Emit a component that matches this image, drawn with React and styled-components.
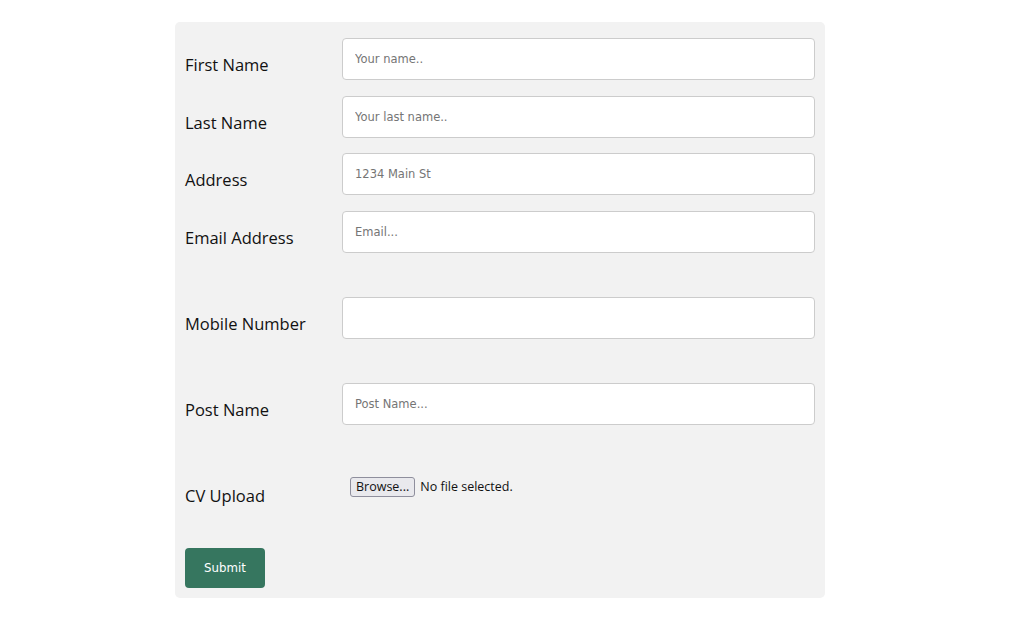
import React from "react";
import styled, { createGlobalStyle } from "styled-components";

const GlobalStyle = createGlobalStyle`
  body {
    margin: 0;
    background: #ffffff;
    font-family: "Open Sans", "Noto Sans", sans-serif;
  }
  * { box-sizing: border-box; }
`;

const Page = styled.div`
  width: 1000px;
  padding-top: 22px;
`;

const Container = styled.div`
  width: 650px;
  margin: 0 auto;
  padding: 10px;
  background: #f2f2f2;
  border-radius: 5px;
`;

const Row = styled.div`
  display: grid;
  grid-template-columns: 157px 1fr;
  align-items: start;
  height: ${(p) => p.$h}px;
`;

const Label = styled.label`
  display: block;
  padding-top: 22px;
  font-size: 16.5px;
  line-height: 22px;
  color: #111;
`;

const Field = styled.div`
  padding-top: 6px;
`;

const TextInput = styled.input`
  width: 100%;
  height: 42px;
  padding: 12px;
  border: 1px solid #ccc;
  border-radius: 4px;
  background: #fff;
  font-family: "DejaVu Sans", Verdana, sans-serif;
  font-size: 11.5px;
  color: #333;
  outline: none;

  &::placeholder {
    color: #757575;
  }
`;

const FileBox = styled.label`
  display: flex;
  align-items: center;
  gap: 5px;
  padding: 8px;
  font-family: "Open Sans", "Noto Sans", sans-serif;
  font-size: 12.5px;
  color: #111;

  input {
    display: none;
  }
`;

const BrowseButton = styled.span`
  display: inline-flex;
  align-items: center;
  height: 20px;
  padding: 0 5px;
  border: 1px solid #8f8f9d;
  border-radius: 3px;
  background: #e9e9ed;
  font-size: 12.5px;
  color: #111;
`;

const Submit = styled.button`
  margin-top: 6px;
  width: 80px;
  height: 40px;
  border: none;
  border-radius: 4px;
  background: #36765f;
  color: #fff;
  font-family: "DejaVu Sans", Verdana, sans-serif;
  font-size: 11.8px;
  cursor: pointer;
`;

const fields = [
  { id: "fname", label: "First Name", placeholder: "Your name..", h: 57.67 },
  { id: "lname", label: "Last Name", placeholder: "Your last name..", h: 57.67 },
  { id: "address", label: "Address", placeholder: "1234 Main St", h: 57.66 },
  { id: "email", label: "Email Address", placeholder: "Email...", h: 86 },
  { id: "mobile", label: "Mobile Number", placeholder: "", h: 86 },
  { id: "post", label: "Post Name", placeholder: "Post Name...", h: 86 },
];

export default function App() {
  return (
    <>
      <GlobalStyle />
      <Page>
        <Container>
          <form onSubmit={(e) => e.preventDefault()}>
            {fields.map((f) => (
              <Row key={f.id} $h={f.h}>
                <Label htmlFor={f.id}>{f.label}</Label>
                <Field>
                  <TextInput id={f.id} type="text" placeholder={f.placeholder} />
                </Field>
              </Row>
            ))}
            <Row $h={79}>
              <Label htmlFor="cv">CV Upload</Label>
              <Field>
                <FileBox>
                  <BrowseButton>Browse...</BrowseButton>
                  <span>No file selected.</span>
                  <input id="cv" type="file" />
                </FileBox>
              </Field>
            </Row>
            <Submit type="submit">Submit</Submit>
          </form>
        </Container>
      </Page>
    </>
  );
}
